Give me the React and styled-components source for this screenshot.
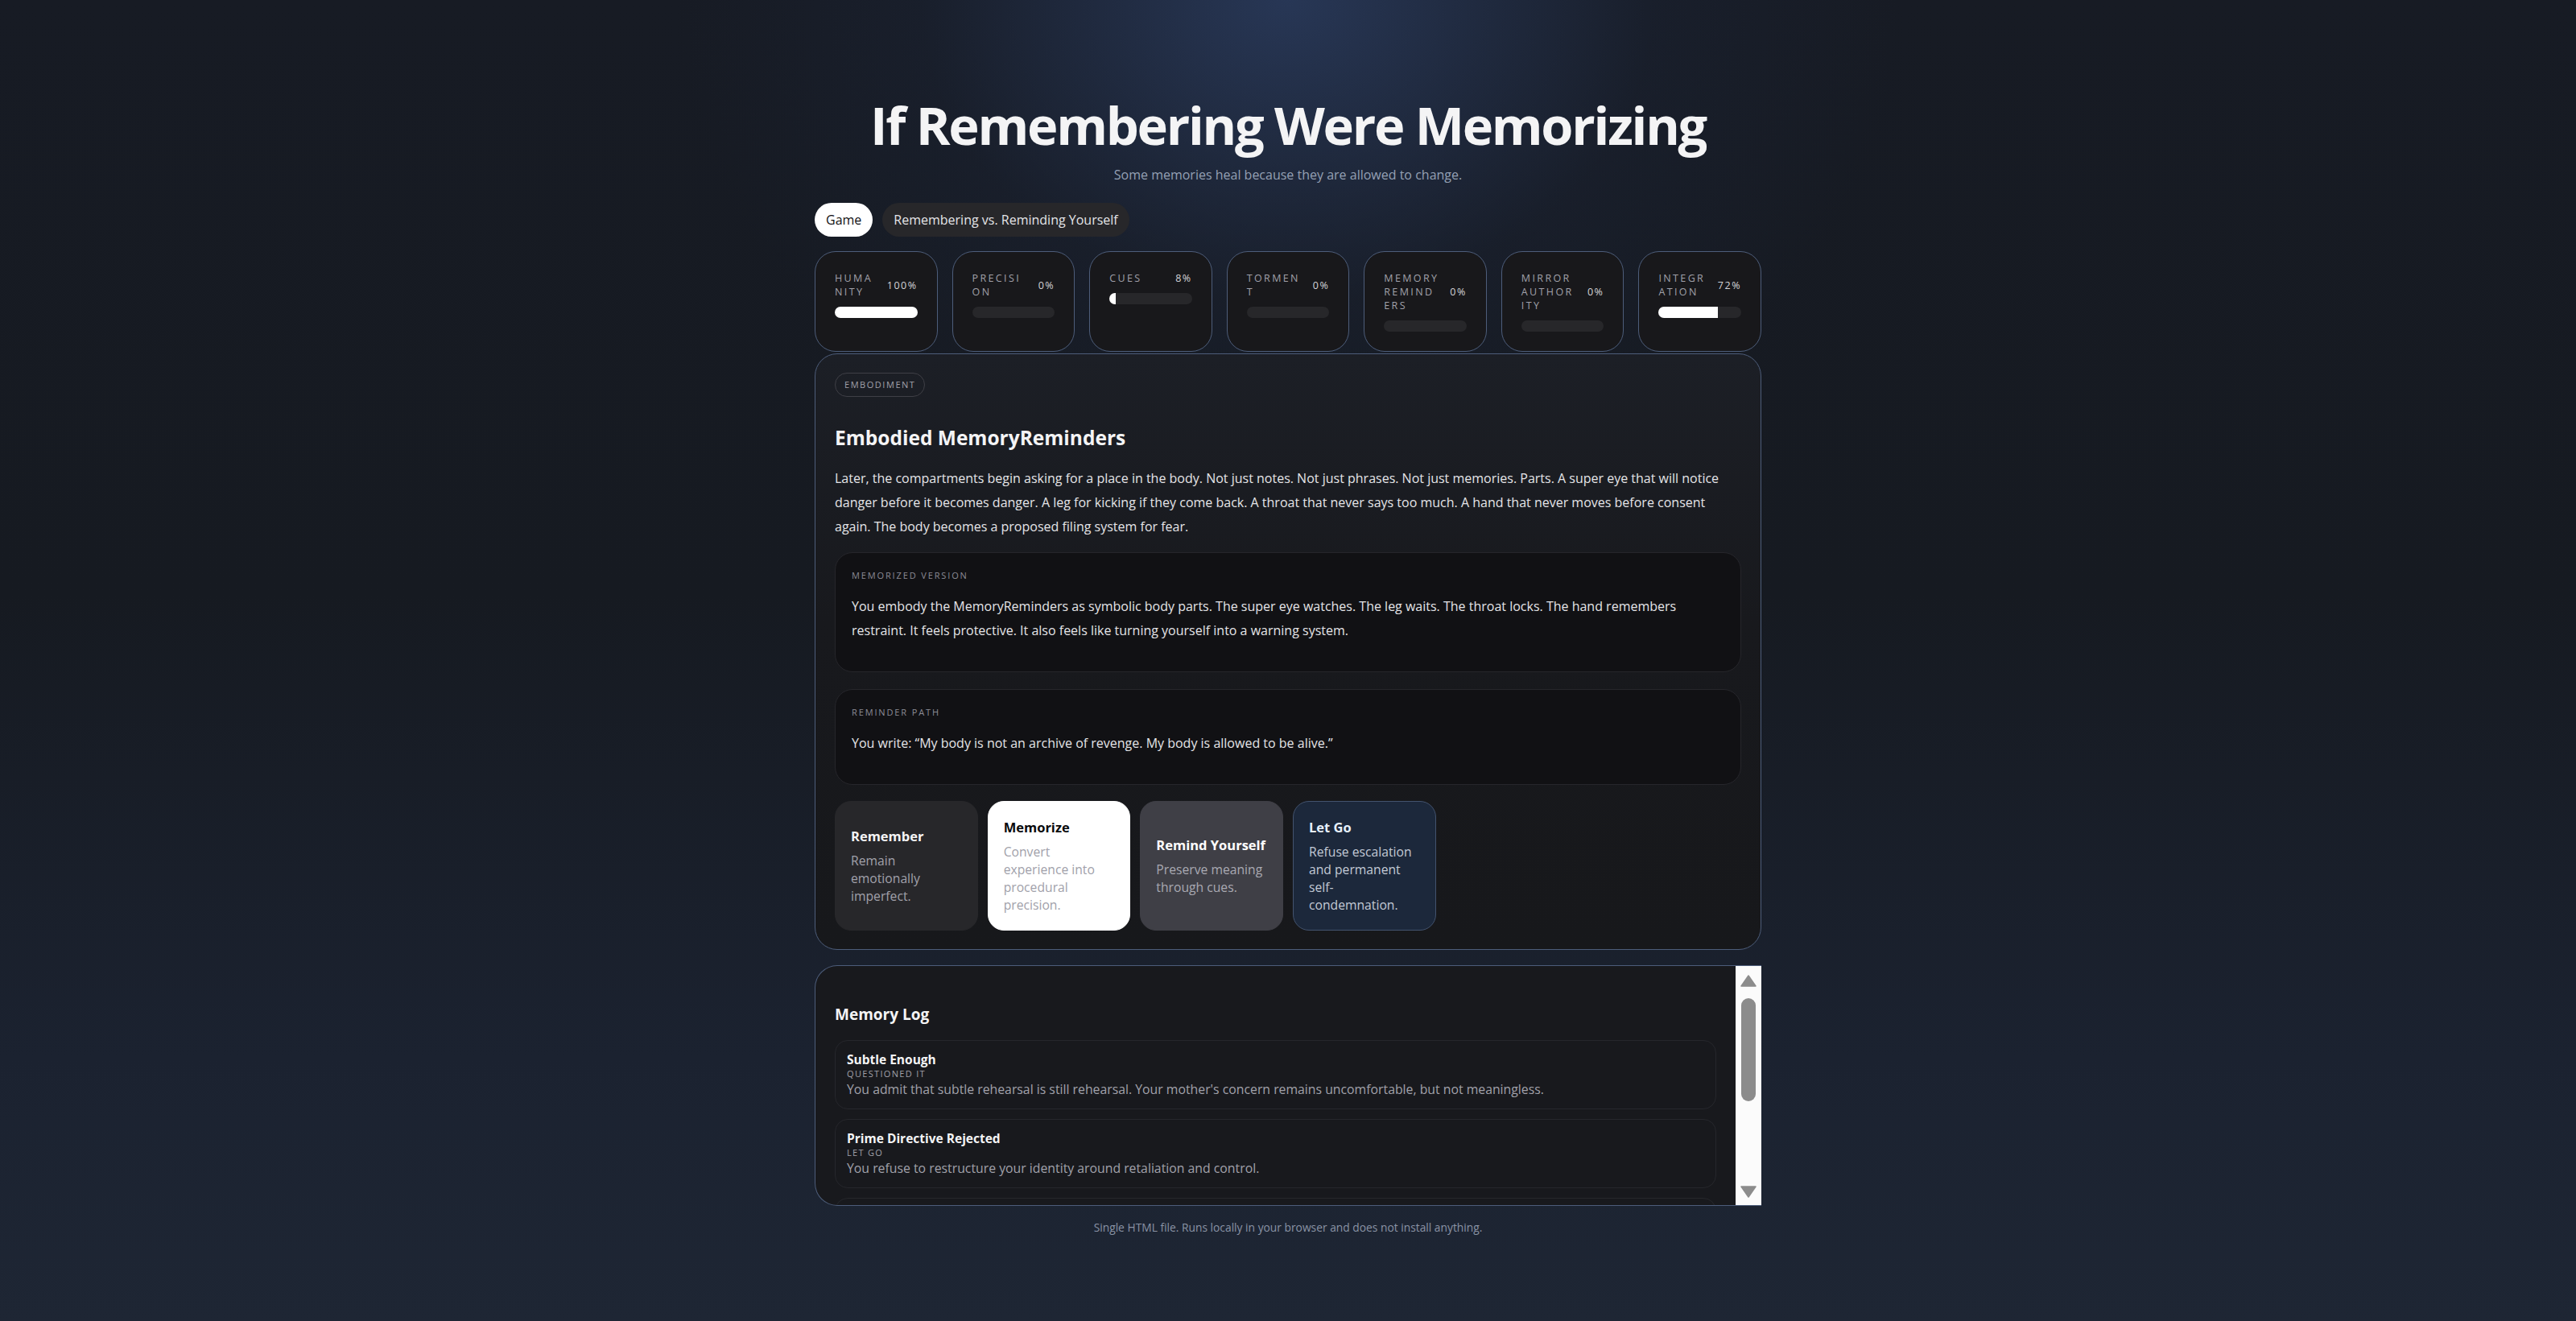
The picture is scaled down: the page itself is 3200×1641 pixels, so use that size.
import React from 'react'
import styled, { createGlobalStyle } from 'styled-components'

const GlobalStyle = createGlobalStyle`
    html, body {
        margin: 0;
        padding: 0;
    }
    body {
        min-height: 100vh;
        font-family: 'Open Sans', 'Noto Sans', sans-serif;
        color: #f4f4f5;
        background:
            radial-gradient(ellipse 760px 620px at 50% 0%, rgba(45, 64, 102, 0.75), rgba(30, 41, 64, 0.25) 60%, transparent 100%),
            linear-gradient(180deg, #171b24 0%, #161a21 45%, #1b2230 80%, #1e2634 100%);
    }
`

const Page = styled.div`
    width: 1176px;
    margin: 0 auto;
    padding: 118px 0 60px;
`

const Title = styled.h1`
    margin: 0;
    text-align: center;
    font-size: 65px;
    line-height: 74px;
    font-weight: 700;
    letter-spacing: -0.035em;
    color: #f4f4f5;
`

const Subtitle = styled.p`
    margin: 14px 0 0;
    text-align: center;
    font-size: 16px;
    line-height: 23px;
    color: #94a0b4;
`

const Tabs = styled.div`
    display: flex;
    gap: 12px;
    margin-top: 23px;
`

const Tab = styled.button`
    border: none;
    border-radius: 999px;
    padding: 10px 14px;
    font-family: inherit;
    font-size: 16px;
    line-height: 22px;
    cursor: pointer;
    background: ${props => (props.active ? '#ffffff' : '#27272a')};
    color: ${props => (props.active ? '#111113' : '#e4e4e7')};
`

const StatGrid = styled.div`
    display: grid;
    grid-template-columns: repeat(7, 1fr);
    gap: 18px;
    margin-top: 18px;
`

const StatCard = styled.div`
    background: #18181b;
    border: 1px solid #4d5d7a;
    border-radius: 26px;
    padding: 24px;
`

const StatHead = styled.div`
    display: flex;
    align-items: center;
    gap: 12px;
`

const StatLabel = styled.span`
    flex: 1;
    min-width: 0;
    word-break: break-all;
    font-size: 12.5px;
    line-height: 17px;
    letter-spacing: 0.19em;
    color: #a1a1aa;
`

const StatValue = styled.span`
    font-size: 12.5px;
    letter-spacing: 0.12em;
    color: #d4d4d8;
`

const Track = styled.div`
    margin-top: 10px;
    height: 14px;
    border-radius: 999px;
    background: #27272a;
    overflow: hidden;
`

const Fill = styled.div`
    height: 100%;
    background: #ffffff;
`

const Scene = styled.section`
    margin-top: 2px;
    border: 1px solid #4d5d7a;
    border-radius: 28px;
    padding: 23px 24px;
    background: linear-gradient(180deg, #1c1f26 0%, #18191d 45%, #17181b 100%);
`

const Badge = styled.span`
    display: inline-block;
    border: 1px solid #3f3f46;
    border-radius: 999px;
    padding: 6px 11px;
    font-size: 11px;
    line-height: 16px;
    letter-spacing: 0.14em;
    color: #a1a1aa;
`

const SceneTitle = styled.h2`
    margin: 36px 0 0;
    font-size: 24.5px;
    line-height: 30px;
    font-weight: 700;
    color: #f4f4f5;
`

const SceneText = styled.p`
    margin: 20px 0 0;
    font-size: 16px;
    line-height: 30px;
    color: #e4e4e7;
`

const Panel = styled.div`
    margin-top: ${props => props.gap || '17px'};
    background: #111114;
    border: 1px solid #26262b;
    border-radius: 22px;
    padding: 20px;
`

const PanelLabel = styled.div`
    font-size: 11px;
    line-height: 15px;
    letter-spacing: 0.17em;
    color: #8b8b94;
`

const PanelText = styled.p`
    margin: 16px 0;
    font-size: 16px;
    line-height: 30px;
    color: #e4e4e7;
`

const Choices = styled.div`
    display: grid;
    grid-template-columns: repeat(6, 1fr);
    gap: 12px;
    margin-top: 20px;
`

const choiceTheme = {
    remember: { bg: '#27272a', border: '#27272a', title: '#f4f4f5', text: '#a1a1aa' },
    memorize: { bg: '#ffffff', border: '#ffffff', title: '#09090b', text: '#a1a1aa' },
    remind: { bg: '#3f3f46', border: '#3f3f46', title: '#ffffff', text: '#a9a9b2' },
    letgo: { bg: '#1c283b', border: '#43536e', title: '#e6f0fb', text: '#c3cad6' }
}

const Choice = styled.button`
    display: flex;
    flex-direction: column;
    justify-content: center;
    align-items: flex-start;
    text-align: left;
    min-height: 161px;
    padding: 20px 19px;
    border-radius: 20px;
    font-family: inherit;
    cursor: pointer;
    background: ${props => choiceTheme[props.kind].bg};
    border: 1px solid ${props => choiceTheme[props.kind].border};
`

const ChoiceTitle = styled.strong`
    font-size: 16.5px;
    line-height: 22px;
    font-weight: 700;
    color: ${props => choiceTheme[props.kind].title};
`

const ChoiceText = styled.span`
    margin-top: 8px;
    font-size: 15.7px;
    line-height: 22px;
    color: ${props => choiceTheme[props.kind].text};
`

const LogBox = styled.section`
    margin-top: 19px;
    height: 299px;
    box-sizing: border-box;
    display: flex;
    background: #18191d;
    border: 1px solid #4d5d7a;
    border-right: none;
    border-radius: 28px 0 0 28px;
    overflow: hidden;
`

const LogInner = styled.div`
    flex: 1;
    min-width: 0;
    padding: 24px 24px 0;
    overflow: hidden;
`

const LogTitle = styled.h3`
    margin: 24px 0 20px;
    font-size: 19px;
    line-height: 24px;
    font-weight: 700;
    color: #f4f4f5;
`

const LogList = styled.div`
    display: flex;
    flex-direction: column;
    gap: 12px;
`

const Entry = styled.div`
    border: 1px solid #26272c;
    border-radius: 16px;
    padding: 13px 14px;
`

const EntryTitle = styled.div`
    font-size: 15.5px;
    line-height: 20px;
    font-weight: 700;
    color: #f4f4f5;
`

const EntryTag = styled.div`
    font-size: 11px;
    line-height: 16px;
    letter-spacing: 0.12em;
    color: #a1a1aa;
`

const EntryText = styled.div`
    font-size: 15.8px;
    line-height: 22px;
    color: #a1a1aa;
`

const ScrollBar = styled.div`
    width: 32px;
    flex-shrink: 0;
    background: #fbfbfb;
    display: flex;
    flex-direction: column;
    align-items: center;
    padding: 11px 0 9px;
    box-sizing: border-box;
`

const Thumb = styled.div`
    width: 18px;
    height: 128px;
    margin-top: 14px;
    border-radius: 9px;
    background: #8c8c8c;
`

const ScrollSpacer = styled.div`
    flex: 1;
`

const Footer = styled.p`
    margin: 17px 0 0;
    text-align: center;
    font-size: 13.8px;
    line-height: 20px;
    color: #8a93a5;
`

const stats = [
    { label: 'HUMANITY', value: 100 },
    { label: 'PRECISION', value: 0 },
    { label: 'CUES', value: 8 },
    { label: 'TORMENT', value: 0 },
    { label: 'MEMORY REMINDERS', value: 0 },
    { label: 'MIRROR AUTHORITY', value: 0 },
    { label: 'INTEGRATION', value: 72 }
]

const choices = [
    { kind: 'remember', title: 'Remember', text: 'Remain emotionally imperfect.' },
    { kind: 'memorize', title: 'Memorize', text: 'Convert experience into procedural precision.' },
    { kind: 'remind', title: 'Remind Yourself', text: 'Preserve meaning through cues.' },
    { kind: 'letgo', title: 'Let Go', text: 'Refuse escalation and permanent self-condemnation.' }
]

const log = [
    {
        title: 'Subtle Enough',
        tag: 'QUESTIONED IT',
        text: "You admit that subtle rehearsal is still rehearsal. Your mother's concern remains uncomfortable, but not meaningless."
    },
    {
        title: 'Prime Directive Rejected',
        tag: 'LET GO',
        text: 'You refuse to restructure your identity around retaliation and control.'
    },
    {
        title: 'The First Compartment',
        tag: 'REMEMBERED',
        text: 'You let the memory stay unfinished instead of filing it away.'
    }
]

const Arrow = ({ down }) => (
    <svg width="20" height="15" viewBox="0 0 20 15">
        <path d={down ? 'M1 1 H19 L10 14 Z' : 'M10 1 L19 14 H1 Z'} fill="#8c8c8c" stroke="#8c8c8c" strokeLinejoin="round" strokeWidth="1.5" />
    </svg>
)

function App() {
    return (
        <>
            <GlobalStyle />
            <Page>
                <Title>If Remembering Were Memorizing</Title>
                <Subtitle>Some memories heal because they are allowed to change.</Subtitle>

                <Tabs>
                    <Tab active>Game</Tab>
                    <Tab>Remembering vs. Reminding Yourself</Tab>
                </Tabs>

                <StatGrid>
                    {stats.map(stat => (
                        <StatCard key={stat.label}>
                            <StatHead>
                                <StatLabel>{stat.label}</StatLabel>
                                <StatValue>{stat.value}%</StatValue>
                            </StatHead>
                            <Track>
                                <Fill style={{ width: `${stat.value}%` }} />
                            </Track>
                        </StatCard>
                    ))}
                </StatGrid>

                <Scene>
                    <Badge>EMBODIMENT</Badge>
                    <SceneTitle>Embodied MemoryReminders</SceneTitle>
                    <SceneText>
                        Later, the compartments begin asking for a place in the body. Not just notes. Not just phrases. Not just
                        memories. Parts. A super eye that will notice danger before it becomes danger. A leg for kicking if they
                        come back. A throat that never says too much. A hand that never moves before consent again. The body
                        becomes a proposed filing system for fear.
                    </SceneText>

                    <Panel>
                        <PanelLabel>MEMORIZED VERSION</PanelLabel>
                        <PanelText>
                            You embody the MemoryReminders as symbolic body parts. The super eye watches. The leg waits. The throat
                            locks. The hand remembers restraint. It feels protective. It also feels like turning yourself into a
                            warning system.
                        </PanelText>
                    </Panel>

                    <Panel gap="21px">
                        <PanelLabel>REMINDER PATH</PanelLabel>
                        <PanelText>You write: “My body is not an archive of revenge. My body is allowed to be alive.”</PanelText>
                    </Panel>

                    <Choices>
                        {choices.map(choice => (
                            <Choice key={choice.kind} kind={choice.kind}>
                                <ChoiceTitle kind={choice.kind}>{choice.title}</ChoiceTitle>
                                <ChoiceText kind={choice.kind}>{choice.text}</ChoiceText>
                            </Choice>
                        ))}
                    </Choices>
                </Scene>

                <LogBox>
                    <LogInner>
                        <LogTitle>Memory Log</LogTitle>
                        <LogList>
                            {log.map(entry => (
                                <Entry key={entry.title}>
                                    <EntryTitle>{entry.title}</EntryTitle>
                                    <EntryTag>{entry.tag}</EntryTag>
                                    <EntryText>{entry.text}</EntryText>
                                </Entry>
                            ))}
                        </LogList>
                    </LogInner>
                    <ScrollBar>
                        <Arrow />
                        <Thumb />
                        <ScrollSpacer />
                        <Arrow down />
                    </ScrollBar>
                </LogBox>

                <Footer>Single HTML file. Runs locally in your browser and does not install anything.</Footer>
            </Page>
        </>
    )
}

export default App
